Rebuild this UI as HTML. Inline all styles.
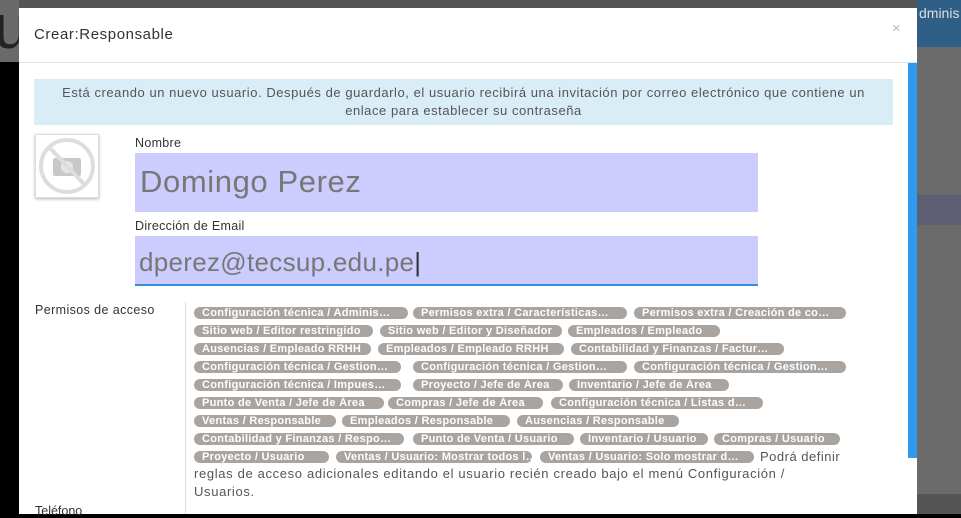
<!DOCTYPE html>
<html><head><meta charset="utf-8"><style>
*{margin:0;padding:0;box-sizing:border-box}
body{width:961px;height:514px;overflow:hidden;position:relative;background:#000;font-family:"Liberation Sans",sans-serif}
.abs{position:absolute}
.tag{position:absolute;height:12px;background:#a9a4a0;color:#fff;font-weight:bold;font-size:11px;letter-spacing:.3px;line-height:12px;border-radius:6px;padding:0 8px;white-space:nowrap;overflow:hidden}
</style></head><body>
<div class="abs" style="left:0;top:0;width:961px;height:62px;background:#555"></div>
<div class="abs" style="left:0;top:0;width:19px;height:62px;background:#6a6a6a"></div>
<div class="abs" style="left:-6px;top:-8px;font-size:62px;color:#222">u</div>
<div class="abs" style="left:917px;top:0;width:44px;height:47px;background:#2f5f86"></div>
<div class="abs" style="left:917px;top:47px;width:44px;height:467px;background:#6b6b6b"></div>
<div class="abs" style="left:917px;top:195px;width:44px;height:30px;background:#5d5e73"></div>
<div class="abs" style="left:917px;top:494px;width:44px;height:20px;background:#555"></div>
<div class="abs" style="left:919px;top:5px;font-size:14px;color:#ddd">dminis</div>
<div class="abs" style="left:19px;top:8px;width:898px;height:506px;background:#fff"></div>
<div class="abs" style="left:19px;top:62px;width:898px;height:1px;background:#e3e3e3"></div>
<div class="abs" style="left:34px;top:26px;font-size:15px;letter-spacing:.6px;color:#333">Crear:Responsable</div>
<div class="abs" style="left:892px;top:20px;font-size:15px;color:#bbb">×</div>
<div class="abs" style="left:908px;top:63px;width:9px;height:395px;background:#2e9af0"></div>
<div class="abs" style="left:34px;top:79px;width:859px;height:46px;background:#d9edf6;color:#555;font-size:13px;letter-spacing:.55px;line-height:18px;text-align:center;padding-top:5px;white-space:nowrap">Está creando un nuevo usuario. Después de guardarlo, el usuario recibirá una invitación por correo electrónico que contiene un<br>enlace para establecer su contraseña</div>
<div class="abs" style="left:35px;top:134px;width:64px;height:64px;border:1px solid #ddd;box-shadow:0 1px 3px rgba(0,0,0,.3)">
<svg width="62" height="62" viewBox="0 0 62 62"><circle cx="31" cy="31" r="26" fill="none" stroke="#ddd" stroke-width="4"/><rect x="17" y="23" width="28" height="18" rx="2" fill="#c8c8c8"/><circle cx="31" cy="32" r="6" fill="#e5e5e5"/><line x1="14" y1="13" x2="49" y2="50" stroke="#ddd" stroke-width="4"/></svg></div>
<div class="abs" style="left:135px;top:136px;font-size:12.5px;letter-spacing:.3px;color:#333">Nombre</div>
<div class="abs" style="left:135px;top:153px;width:623px;height:59px;background:#ccccff"></div>
<div class="abs" style="left:140px;top:164px;font-size:31px;letter-spacing:.6px;color:#777">Domingo Perez</div>
<div class="abs" style="left:135px;top:219px;font-size:12.5px;letter-spacing:.3px;color:#333">Dirección de Email</div>
<div class="abs" style="left:135px;top:236px;width:623px;height:50px;background:#ccccff;border-bottom:2px solid #3b8fd9"></div>
<div class="abs" style="left:139px;top:247px;font-size:26px;letter-spacing:.3px;color:#777">dperez@tecsup.edu.pe<span style="color:#333;font-weight:100">|</span></div>
<div class="abs" style="left:35px;top:303px;font-size:12.5px;letter-spacing:.4px;color:#333">Permisos de acceso</div>
<div class="abs" style="left:185px;top:302px;width:1px;height:212px;background:#ddd"></div>
<div class="abs" style="left:35px;top:504px;font-size:12.5px;color:#333">Teléfono</div>
<div class="tag" style="left:194px;top:307px;width:214px">Configuración técnica / Adminis…</div>
<div class="tag" style="left:413px;top:307px;width:214px">Permisos extra / Características…</div>
<div class="tag" style="left:634px;top:307px;width:212px">Permisos extra / Creación de co…</div>
<div class="tag" style="left:194px;top:325px;width:179px">Sitio web / Editor restringido</div>
<div class="tag" style="left:380px;top:325px;width:182px">Sitio web / Editor y Diseñador</div>
<div class="tag" style="left:568px;top:325px;width:152px">Empleados / Empleado</div>
<div class="tag" style="left:194px;top:343px;width:177px">Ausencias / Empleado RRHH</div>
<div class="tag" style="left:378px;top:343px;width:186px">Empleados / Empleado RRHH</div>
<div class="tag" style="left:571px;top:343px;width:213px">Contabilidad y Finanzas / Factur…</div>
<div class="tag" style="left:194px;top:361px;width:207px">Configuración técnica / Gestion…</div>
<div class="tag" style="left:413px;top:361px;width:214px">Configuración técnica / Gestion…</div>
<div class="tag" style="left:634px;top:361px;width:212px">Configuración técnica / Gestion…</div>
<div class="tag" style="left:194px;top:379px;width:207px">Configuración técnica / Impues…</div>
<div class="tag" style="left:413px;top:379px;width:150px">Proyecto / Jefe de Área</div>
<div class="tag" style="left:569px;top:379px;width:160px">Inventario / Jefe de Área</div>
<div class="tag" style="left:194px;top:397px;width:190px">Punto de Venta / Jefe de Área</div>
<div class="tag" style="left:388px;top:397px;width:155px">Compras / Jefe de Área</div>
<div class="tag" style="left:551px;top:397px;width:212px">Configuración técnica / Listas d…</div>
<div class="tag" style="left:194px;top:415px;width:142px">Ventas / Responsable</div>
<div class="tag" style="left:342px;top:415px;width:168px">Empleados / Responsable</div>
<div class="tag" style="left:517px;top:415px;width:162px">Ausencias / Responsable</div>
<div class="tag" style="left:194px;top:433px;width:210px">Contabilidad y Finanzas / Respo…</div>
<div class="tag" style="left:413px;top:433px;width:161px">Punto de Venta / Usuario</div>
<div class="tag" style="left:580px;top:433px;width:128px">Inventario / Usuario</div>
<div class="tag" style="left:714px;top:433px;width:126px">Compras / Usuario</div>
<div class="tag" style="left:194px;top:451px;width:135px">Proyecto / Usuario</div>
<div class="tag" style="left:336px;top:451px;width:196px">Ventas / Usuario: Mostrar todos l…</div>
<div class="tag" style="left:540px;top:451px;width:214px">Ventas / Usuario: Solo mostrar d…</div>
<div class="abs" style="left:760px;top:449px;font-size:13px;letter-spacing:.5px;color:#555">Podrá definir</div>
<div class="abs" style="left:194px;top:465px;font-size:13px;letter-spacing:.65px;color:#555;line-height:18px;white-space:nowrap">reglas de acceso adicionales editando el usuario recién creado bajo el menú Configuración /<br>Usuarios.</div>
</body></html>
